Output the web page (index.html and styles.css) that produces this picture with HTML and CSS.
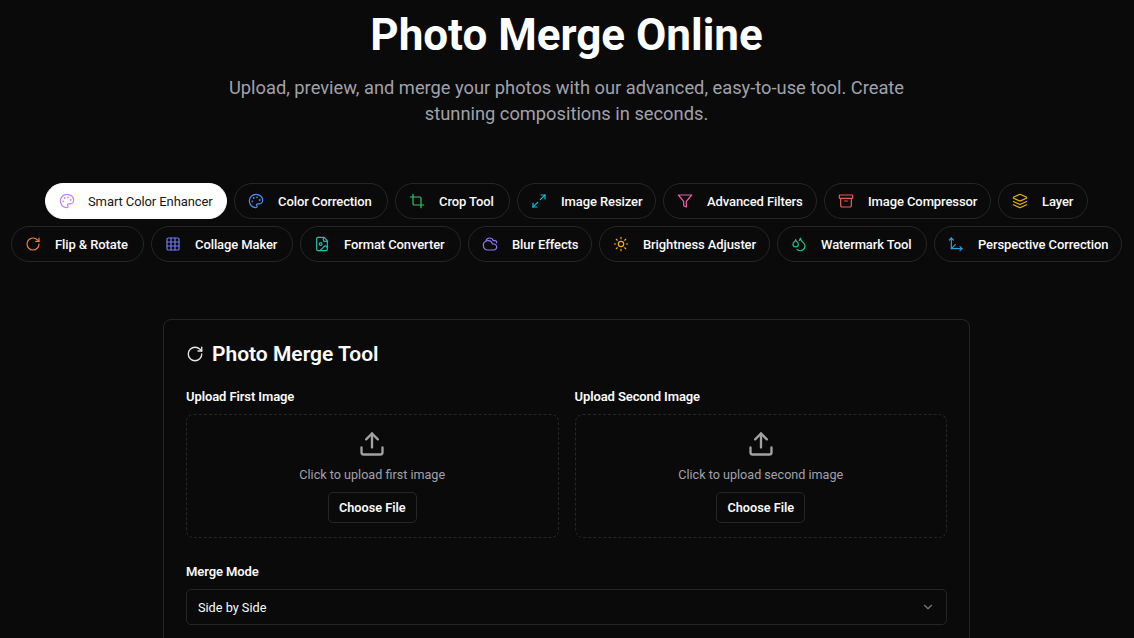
FILE: index.html
```html
<!DOCTYPE html>
<html lang="en">
<head>
<meta charset="utf-8">
<title>Photo Merge Online</title>
<link rel="stylesheet" href="styles.css">
</head>
<body>
<svg class="defs" width="0" height="0" aria-hidden="true">
  <symbol id="i-palette" viewBox="0 0 24 24"><circle cx="13.5" cy="6.5" r=".5" fill="currentColor"/><circle cx="17.5" cy="10.5" r=".5" fill="currentColor"/><circle cx="8.5" cy="7.5" r=".5" fill="currentColor"/><circle cx="6.5" cy="12.5" r=".5" fill="currentColor"/><path d="M12 2C6.5 2 2 6.5 2 12s4.5 10 10 10c.926 0 1.648-.746 1.648-1.688 0-.437-.18-.835-.437-1.125-.29-.289-.438-.652-.438-1.125a1.64 1.64 0 0 1 1.668-1.668h1.996c3.051 0 5.555-2.503 5.555-5.554C21.965 6.012 17.461 2 12 2z"/></symbol>
  <symbol id="i-crop" viewBox="0 0 24 24"><path d="M6 2v14a2 2 0 0 0 2 2h14"/><path d="M18 22V8a2 2 0 0 0-2-2H2"/></symbol>
  <symbol id="i-max" viewBox="0 0 24 24"><polyline points="15 3 21 3 21 9"/><polyline points="9 21 3 21 3 15"/><line x1="21" y1="3" x2="14" y2="10"/><line x1="3" y1="21" x2="10" y2="14"/></symbol>
  <symbol id="i-filter" viewBox="0 0 24 24"><polygon points="22 3 2 3 10 12.46 10 19 14 21 14 12.46 22 3"/></symbol>
  <symbol id="i-archive" viewBox="0 0 24 24"><rect x="2" y="3" width="20" height="5" rx="1"/><path d="M4 8v11a2 2 0 0 0 2 2h12a2 2 0 0 0 2-2V8"/><path d="M10 12h4"/></symbol>
  <symbol id="i-layers" viewBox="0 0 24 24"><path d="m12.83 2.18a2 2 0 0 0-1.66 0L2.6 6.08a1 1 0 0 0 0 1.83l8.58 3.91a2 2 0 0 0 1.66 0l8.58-3.9a1 1 0 0 0 0-1.83Z"/><path d="m22 17.65-9.17 4.16a2 2 0 0 1-1.66 0L2 17.65"/><path d="m22 12.65-9.17 4.16a2 2 0 0 1-1.66 0L2 12.65"/></symbol>
  <symbol id="i-rotate" viewBox="0 0 24 24"><path d="M21 12a9 9 0 1 1-9-9c2.52 0 4.93 1 6.74 2.74L21 8"/><path d="M21 3v5h-5"/></symbol>
  <symbol id="i-grid" viewBox="0 0 24 24"><rect x="3" y="3" width="18" height="18" rx="2"/><path d="M3 9h18M3 15h18M9 3v18M15 3v18"/></symbol>
  <symbol id="i-file" viewBox="0 0 24 24"><path d="M15 2H6a2 2 0 0 0-2 2v16a2 2 0 0 0 2 2h12a2 2 0 0 0 2-2V7Z"/><path d="M14 2v4a2 2 0 0 0 2 2h4"/><circle cx="10" cy="12" r="2"/><path d="m20 17-1.296-1.296a2.41 2.41 0 0 0-3.408 0L9 22"/></symbol>
  <symbol id="i-cloud" viewBox="0 0 24 24"><path d="M17.5 21H9a7 7 0 1 1 6.71-9h1.79a4.5 4.5 0 1 1 0 9Z"/><path d="M22 10a3 3 0 0 0-3-3h-2.207a5.502 5.502 0 0 0-10.702.5"/></symbol>
  <symbol id="i-sun" viewBox="0 0 24 24"><circle cx="12" cy="12" r="4"/><path d="M12 2v2M12 20v2M4.93 4.93l1.41 1.41M17.66 17.66l1.41 1.41M2 12h2M20 12h2M6.34 17.66l-1.41 1.41M19.07 4.93l-1.41 1.41"/></symbol>
  <symbol id="i-drops" viewBox="0 0 24 24"><path d="M7 16.3c2.2 0 4-1.83 4-4.05 0-1.16-.57-2.26-1.71-3.19S7.29 6.75 7 5.3c-.29 1.45-1.14 2.84-2.29 3.76S3 11.1 3 12.25c0 2.22 1.8 4.05 4 4.05z"/><path d="M12.56 6.6A10.97 10.97 0 0 0 14 3.02c.5 2.5 2 4.9 4 6.5s3 3.5 3 5.5a6.98 6.98 0 0 1-11.91 4.97"/></symbol>
  <symbol id="i-move" viewBox="0 0 24 24"><path d="M5 3v16h16"/><path d="m5 19 6-6"/><path d="m2 6 3-3 3 3"/><path d="m18 16 3 3-3 3"/></symbol>
  <symbol id="i-upload" viewBox="0 0 24 24"><path d="M21 15v4a2 2 0 0 1-2 2H5a2 2 0 0 1-2-2v-4"/><polyline points="17 8 12 3 7 8"/><line x1="12" y1="3" x2="12" y2="15"/></symbol>
  <symbol id="i-chev" viewBox="0 0 24 24"><path d="m6 9 6 6 6-6"/></symbol>
</svg>
<main class="page">
  <header class="hero">
    <h1 class="title">Photo Merge Online</h1>
    <p class="lead">Upload, preview, and merge your photos with our advanced, easy-to-use tool. Create stunning compositions in seconds.</p>
  </header>
  <nav class="tools">
    <div class="tool-row">
      <a class="pill active w182"><svg class="icon c-purple"><use href="#i-palette"/></svg><span>Smart Color Enhancer</span></a>
      <a class="pill w154"><svg class="icon c-blue"><use href="#i-palette"/></svg><span>Color Correction</span></a>
      <a class="pill w115"><svg class="icon c-green"><use href="#i-crop"/></svg><span>Crop Tool</span></a>
      <a class="pill w139"><svg class="icon c-cyan"><use href="#i-max"/></svg><span>Image Resizer</span></a>
      <a class="pill w154"><svg class="icon c-pink"><use href="#i-filter"/></svg><span>Advanced Filters</span></a>
      <a class="pill w167"><svg class="icon c-red"><use href="#i-archive"/></svg><span>Image Compressor</span></a>
      <a class="pill w90"><svg class="icon c-yellow"><use href="#i-layers"/></svg><span>Layer</span></a>
    </div>
    <div class="tool-row">
      <a class="pill w133"><svg class="icon c-orange"><use href="#i-rotate"/></svg><span>Flip &amp; Rotate</span></a>
      <a class="pill w142"><svg class="icon c-indigo"><use href="#i-grid"/></svg><span>Collage Maker</span></a>
      <a class="pill w161"><svg class="icon c-teal"><use href="#i-file"/></svg><span>Format Converter</span></a>
      <a class="pill w124"><svg class="icon c-violet"><use href="#i-cloud"/></svg><span>Blur Effects</span></a>
      <a class="pill w171"><svg class="icon c-amber"><use href="#i-sun"/></svg><span>Brightness Adjuster</span></a>
      <a class="pill w150"><svg class="icon c-emerald"><use href="#i-drops"/></svg><span>Watermark Tool</span></a>
      <a class="pill w188"><svg class="icon c-sky"><use href="#i-move"/></svg><span>Perspective Correction</span></a>
    </div>
  </nav>
  <section class="card">
    <h2 class="card-title"><svg class="icon-title"><use href="#i-rotate"/></svg>Photo Merge Tool</h2>
    <div class="uploads">
      <div class="field">
        <label class="label">Upload First Image</label>
        <div class="drop">
          <svg class="icon-upload"><use href="#i-upload"/></svg>
          <p class="drop-text">Click to upload first image</p>
          <button class="btn">Choose File</button>
        </div>
      </div>
      <div class="field">
        <label class="label">Upload Second Image</label>
        <div class="drop">
          <svg class="icon-upload"><use href="#i-upload"/></svg>
          <p class="drop-text">Click to upload second image</p>
          <button class="btn">Choose File</button>
        </div>
      </div>
    </div>
    <div class="field mode">
      <label class="label">Merge Mode</label>
      <div class="select"><span>Side by Side</span><svg class="icon-chev"><use href="#i-chev"/></svg></div>
    </div>
  </section>
</main>
</body>
</html>
```
FILE: styles.css
```css
* { box-sizing: border-box; }
html, body { margin: 0; height: 100%; overflow: hidden; }
body { background: #0a0a0a; color: #fafafa; font-family: Roboto, "Noto Sans", sans-serif; }
.defs { position: absolute; }
.page { display: flex; flex-direction: column; align-items: center; padding-right: 1px; }
.hero { width: 700px; text-align: center; }
.title { margin: 7px 0 0; font-size: 44px; line-height: 56px; font-weight: 700; color: #fff; }
.lead { margin: 12px 0 0; padding: 0 6px; font-size: 18.3px; line-height: 25.5px; color: #a1a1aa; }
.tools { margin-top: 57px; display: flex; flex-direction: column; gap: 7px; align-items: center; }
.tool-row { display: flex; gap: 7px; }
.pill { display: flex; align-items: center; gap: 14px; height: 36px; padding: 0 0 0 13px; border: 1px solid #262626; border-radius: 18px; font-size: 13px; font-weight: 500; letter-spacing: -0.1px; white-space: nowrap; color: #fafafa; }
.pill.active { gap: 13px; background: #fff; color: #171717; border-color: #fff; font-weight: 400; }
.w90 { width: 90px; }
.w115 { width: 115px; }
.w124 { width: 124px; }
.w133 { width: 133px; }
.w139 { width: 139px; }
.w142 { width: 142px; }
.w150 { width: 150px; }
.w154 { width: 154px; }
.w161 { width: 161px; }
.w167 { width: 167px; }
.w171 { width: 171px; }
.w182 { width: 182px; }
.w188 { width: 188px; }
.icon { width: 16px; height: 16px; fill: none; stroke: currentColor; stroke-width: 1.8; stroke-linecap: round; stroke-linejoin: round; flex: none; }
.c-purple { color: #c084fc; }
.c-blue { color: #4b8fee; }
.c-green { color: #33c46e; }
.c-cyan { color: #14bcd8; }
.c-pink { color: #ec5fa5; }
.c-red { color: #ef5a5a; }
.c-yellow { color: #eab308; }
.c-orange { color: #f07f2e; }
.c-indigo { color: #6f78ee; }
.c-teal { color: #1fc0ac; }
.c-violet { color: #9079f0; }
.c-amber { color: #f0aa14; }
.c-emerald { color: #22c08a; }
.c-sky { color: #2a9fdc; }
.card { margin-top: 57px; width: 807px; padding: 18px 22px 40px; border: 1px solid #262626; border-radius: 8px; background: #0a0a0a; }
.card-title { display: flex; align-items: center; gap: 8px; margin: 0; font-size: 21px; line-height: 32px; font-weight: 600; color: #fff; }
.icon-title { width: 18px; height: 18px; fill: none; stroke: #e5e5e5; stroke-width: 1.8; stroke-linecap: round; stroke-linejoin: round; }
.uploads { margin-top: 18px; display: grid; grid-template-columns: 1fr 1fr; gap: 16px; }
.label { display: block; font-size: 13px; line-height: 18px; font-weight: 600; letter-spacing: -0.1px; color: #fafafa; }
.drop { margin-top: 8px; height: 124px; display: flex; flex-direction: column; align-items: center; border: 1px dashed #262626; border-radius: 8px; padding-top: 15px; }
.icon-upload { width: 28px; height: 28px; fill: none; stroke: #a3a3a3; stroke-width: 2; stroke-linecap: round; stroke-linejoin: round; }
.drop-text { margin: 8px 0 0; font-size: 12.6px; line-height: 18px; color: #a1a1aa; }
.btn { margin-top: 8px; height: 31px; width: 89px; padding: 0; font: 600 12.7px Roboto, sans-serif; color: #fafafa; background: #0a0a0a; border: 1px solid #262626; border-radius: 5px; }
.mode { margin-top: 25px; }
.select { margin-top: 8px; height: 36px; display: flex; align-items: center; justify-content: space-between; padding: 0 11px; border: 1px solid #262626; border-radius: 5px; font-size: 12.7px; color: #fafafa; }
.icon-chev { width: 14px; height: 14px; fill: none; stroke: #7a7a7a; stroke-width: 2; stroke-linecap: round; stroke-linejoin: round; }
```
